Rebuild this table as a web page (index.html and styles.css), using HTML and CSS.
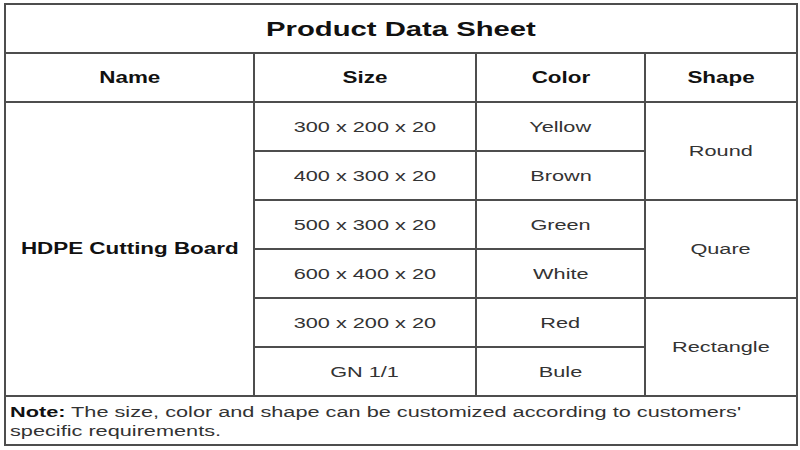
FILE: index.html
```html
<!DOCTYPE html>
<html lang="en">
<head>
<meta charset="utf-8">
<title>Product Data Sheet</title>
<link rel="stylesheet" href="styles.css">
</head>
<body>
<div class="page">
  <table class="sheet">
    <colgroup>
      <col class="c-name">
      <col class="c-size">
      <col class="c-color">
      <col class="c-shape">
    </colgroup>
    <tr>
      <th class="title" colspan="4"><span class="wide wide-title">Product Data Sheet</span></th>
    </tr>
    <tr>
      <th class="head"><span class="wide">Name</span></th>
      <th class="head"><span class="wide">Size</span></th>
      <th class="head"><span class="wide">Color</span></th>
      <th class="head"><span class="wide">Shape</span></th>
    </tr>
    <tr>
      <td class="name" rowspan="6"><span class="wide">HDPE Cutting Board</span></td>
      <td><span class="wide">300 x 200 x 20</span></td>
      <td><span class="wide">Yellow</span></td>
      <td rowspan="2"><span class="wide">Round</span></td>
    </tr>
    <tr>
      <td><span class="wide">400 x 300 x 20</span></td>
      <td><span class="wide">Brown</span></td>
    </tr>
    <tr>
      <td><span class="wide">500 x 300 x 20</span></td>
      <td><span class="wide">Green</span></td>
      <td rowspan="2"><span class="wide">Quare</span></td>
    </tr>
    <tr>
      <td><span class="wide">600 x 400 x 20</span></td>
      <td><span class="wide">White</span></td>
    </tr>
    <tr>
      <td><span class="wide">300 x 200 x 20</span></td>
      <td><span class="wide">Red</span></td>
      <td rowspan="2"><span class="wide">Rectangle</span></td>
    </tr>
    <tr>
      <td><span class="wide">GN 1/1</span></td>
      <td><span class="wide">Bule</span></td>
    </tr>
    <tr>
      <td class="note" colspan="4">
        <p class="note-text"><b>Note:</b> The size, color and shape can be customized according to customers'<br>specific requirements.</p>
      </td>
    </tr>
  </table>
</div>
</body>
</html>
```

FILE: styles.css
```css
html, body {
  margin: 0;
  padding: 0;
  background: #ffffff;
}

.page {
  width: 800px;
  height: 450px;
  padding: 3px 0 0 4px;
  box-sizing: border-box;
  font-family: "Liberation Sans", Arial, sans-serif;
  color: #333333;
}

.sheet {
  width: 792px;
  table-layout: fixed;
  border-collapse: collapse;
}

.c-name { width: 249px; }
.c-size { width: 222px; }
.c-color { width: 169px; }
.c-shape { width: 152px; }

.sheet tr {
  height: 49px;
}

.sheet th,
.sheet td {
  border: 2px solid #4d4d4d;
  padding: 0;
  text-align: center;
  vertical-align: middle;
  font-size: 15.5px;
  font-weight: normal;
  line-height: 18px;
}

.wide {
  display: inline-block;
  transform: scaleX(1.4);
  white-space: nowrap;
}

.sheet th.title {
  font-size: 19.5px;
  font-weight: bold;
  color: #111111;
}

.wide-title {
  transform: scaleX(1.5);
}

.sheet th.head {
  font-size: 16px;
  font-weight: bold;
  color: #111111;
}

.sheet td.name {
  font-size: 16px;
  font-weight: bold;
  color: #111111;
}

.sheet td.note {
  text-align: left;
  vertical-align: top;
  padding: 5px 0 0 4px;
}

.note-text {
  margin: 0;
  width: 560px;
  white-space: nowrap;
  transform: scaleX(1.4);
  transform-origin: 0 0;
  line-height: 19px;
}

.note-text b {
  color: #111111;
}
```
